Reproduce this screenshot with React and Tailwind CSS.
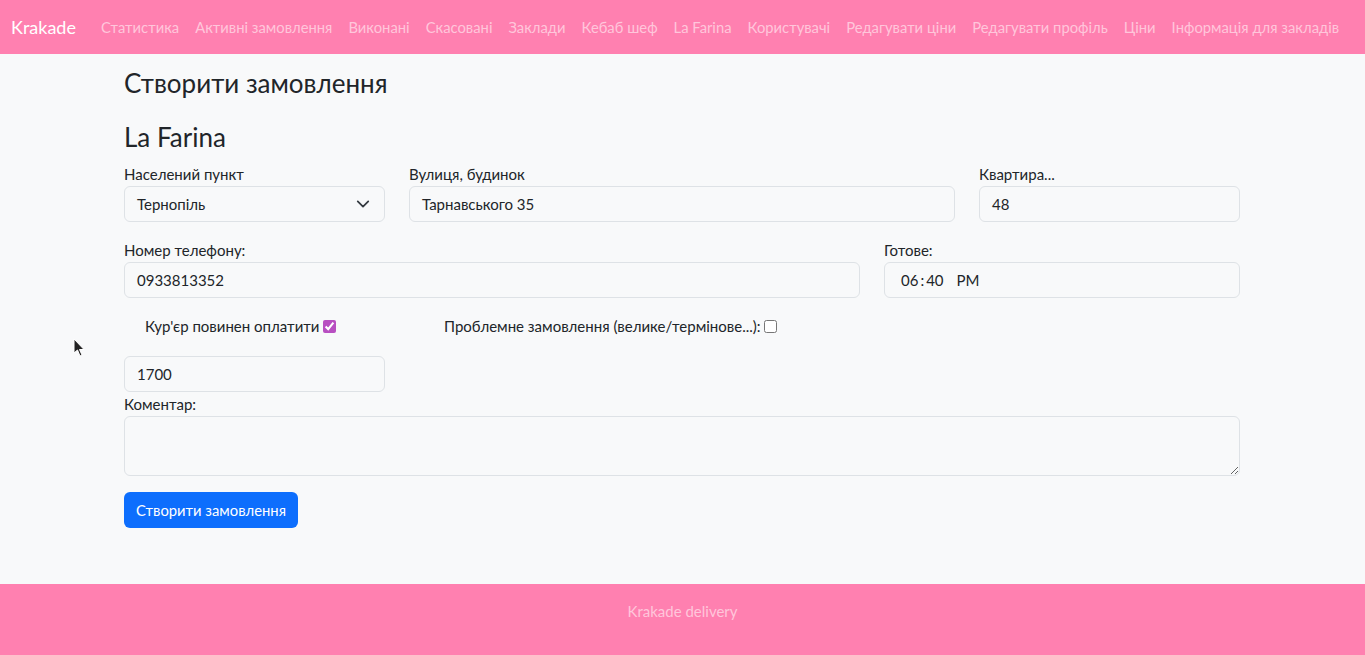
import React from "react";

const links = [
  "Статистика",
  "Активні замовлення",
  "Виконані",
  "Скасовані",
  "Заклади",
  "Кебаб шеф",
  "La Farina",
  "Користувачі",
  "Редагувати ціни",
  "Редагувати профіль",
  "Ціни",
  "Інформація для закладів",
];

function Label({ children, className = "" }) {
  return <div className={"text-[15px] leading-[23px] text-[#212529] " + className}>{children}</div>;
}

function Field({ children, className = "" }) {
  return (
    <div
      className={
        "h-[36px] flex items-center px-[12px] rounded-[6px] border border-[#dee2e6] bg-[#f8f9fa] text-[15px] text-[#212529] " +
        className
      }
    >
      {children}
    </div>
  );
}

export default function App() {
  return (
    <div className="min-h-[655px] flex flex-col bg-[#f8f9fa] font-[Lato,sans-serif] relative">
      <nav className="h-[54px] bg-[#ff80b0] flex items-center pl-[11px]">
        <span className="text-[18px] text-white mr-[25px]">Krakade</span>
        <div className="flex items-center gap-[16px] text-[14.8px] text-[#ffc6db]">
          {links.map((l) => (
            <span key={l} className="whitespace-nowrap">
              {l}
            </span>
          ))}
        </div>
      </nav>

      <main className="w-[1116px] ml-[124px] flex-1 pb-[56px]">
        <h3 className="mt-[14px] text-[26px] leading-[31px] text-[#212529]">Створити замовлення</h3>
        <h3 className="mt-[23px] text-[26px] leading-[31px] text-[#212529]">La Farina</h3>

        <div className="mt-[10px] flex gap-[24px]">
          <div className="w-[261px]">
            <Label>Населений пункт</Label>
            <Field className="justify-between">
              <span>Тернопіль</span>
              <svg width="14" height="14" viewBox="0 0 16 16" fill="none" className="mr-[2px]">
                <path d="M2 5l6 6 6-6" stroke="#343a40" strokeWidth="2" strokeLinecap="round" strokeLinejoin="round" />
              </svg>
            </Field>
          </div>
          <div className="w-[546px]">
            <Label>Вулиця, будинок</Label>
            <Field>Тарнавського 35</Field>
          </div>
          <div className="w-[261px]">
            <Label>Квартира...</Label>
            <Field>48</Field>
          </div>
        </div>

        <div className="mt-[17px] flex gap-[24px]">
          <div className="w-[736px]">
            <Label>Номер телефону:</Label>
            <Field>0933813352</Field>
          </div>
          <div className="w-[356px]">
            <Label>Готове:</Label>
            <Field className="pl-[16px]">
              <span>06</span>
              <span className="mx-[2px]">:</span>
              <span>40</span>
              <span className="ml-[13px]">PM</span>
            </Field>
          </div>
        </div>

        <div className="mt-[17px] h-[22px] flex items-center text-[15px] text-[#212529]">
          <div className="w-[320px] pl-[21px] flex items-center gap-[3px]">
            <span>Кур'єр повинен оплатити</span>
            <input type="checkbox" defaultChecked className="w-[13px] h-[13px] accent-[#b84fc1]" />
          </div>
          <div className="flex items-center gap-[3px]">
            <span>Проблемне замовлення (велике/термінове...):</span>
            <input type="checkbox" className="w-[13px] h-[13px]" />
          </div>
        </div>

        <div className="mt-[19px] w-[261px]">
          <Field>1700</Field>
        </div>
        <Label className="mt-[1px]">Коментар:</Label>
        <textarea className="block w-full h-[60px] rounded-[6px] border border-[#dee2e6] bg-[#f8f9fa] outline-none" />

        <button className="mt-[16px] h-[36px] px-[12px] rounded-[6px] bg-[#0d6efd] text-white text-[14.8px]">
          Створити замовлення
        </button>
      </main>

      <footer className="h-[71px] bg-[#ff80b0] flex items-start justify-center pt-[16px] text-[15px] text-[#ffc6db]">
        Krakade delivery
      </footer>

      <svg className="absolute left-[73px] top-[338px]" width="12" height="19" viewBox="0 0 12 19">
        <path d="M1 1 L1 15 L4.5 12 L7 18 L9 17 L6.5 11.5 L11 11.5 Z" fill="#222" stroke="#fff" strokeWidth="1" />
      </svg>
    </div>
  );
}
